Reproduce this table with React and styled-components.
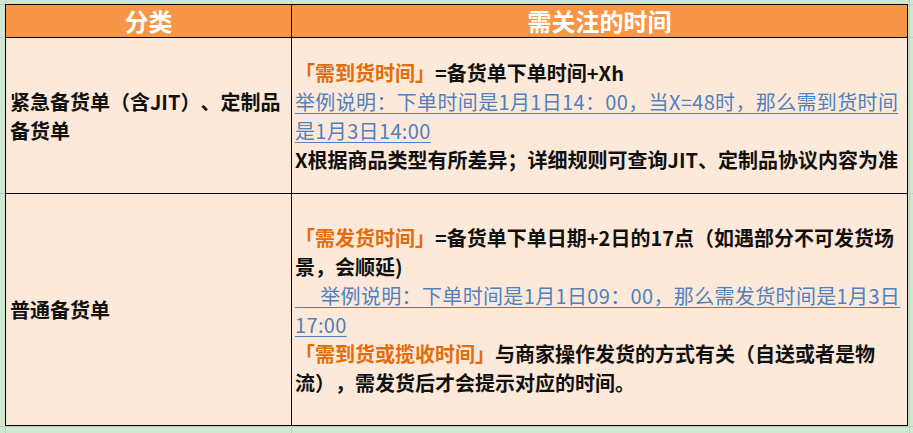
import React from 'react';
import styled, { createGlobalStyle } from 'styled-components';

const GlobalStyle = createGlobalStyle`
  html, body {
    margin: 0;
    padding: 0;
  }
  body {
    width: 913px;
    height: 433px;
    overflow: hidden;
    font-family: "Noto Sans CJK SC", "Noto Sans", sans-serif;
    text-spacing-trim: space-all;
    background-color: #cee8d1;
    background-image:
      linear-gradient(#c3c8c3, #c3c8c3),
      linear-gradient(#c3c8c3, #c3c8c3),
      linear-gradient(#c3c8c3, #c3c8c3),
      linear-gradient(#c3c8c3, #c3c8c3),
      linear-gradient(#c3c8c3, #c3c8c3),
      linear-gradient(#c3c8c3, #c3c8c3),
      linear-gradient(#c3c8c3, #c3c8c3);
    background-size: 1px 100%, 1px 100%, 1px 100%, 100% 1px, 100% 1px, 100% 1px, 100% 1px;
    background-position: 5px 0, 291px 0, 909px 0, 0 4px, 0 37px, 0 193px, 0 426px;
    background-repeat: no-repeat;
  }
`;

const Sheet = styled.div`
  padding: 4px 0 0 5px;
`;

const Table = styled.div`
  display: grid;
  grid-template-columns: 286px 616px;
  grid-template-rows: 33px 156px 232px;
  width: 903px;
  border-left: 1px solid #000;
  border-top: 1px solid #000;
  box-sizing: border-box;
`;

const Cell = styled.div`
  box-sizing: border-box;
  border-right: 1px solid #000;
  border-bottom: 1px solid #000;
  display: flex;
  align-items: center;
  background: #fde9d9;
  padding-left: ${p => p.$pad}px;
`;

const HeadCell = styled(Cell)`
  background: #f79646;
  justify-content: center;
  padding-left: 0;
  color: #fff;
  font-size: 24px;
  font-weight: 700;
  line-height: 1;
`;

const Block = styled.div`
  display: flex;
  flex-direction: column;
`;

const Line = styled.div`
  white-space: nowrap;
  font-size: 20px;
  line-height: 29px;
  font-weight: 700;
  color: #111;
`;

const Key = styled.span`
  color: #e36c0a;
`;

const Example = styled.span`
  color: #4f81bd;
  font-weight: 400;
  letter-spacing: 0.35px;
  text-decoration: underline;
  text-underline-offset: 3px;
  text-decoration-thickness: 1px;
`;

const App = () => {
  return (
    <>
      <GlobalStyle />
      <Sheet>
        <Table>
          <HeadCell>分类</HeadCell>
          <HeadCell>需关注的时间</HeadCell>

          <Cell $pad={4}>
            <Block>
              <Line>紧急备货单（含JIT）、定制品</Line>
              <Line>备货单</Line>
            </Block>
          </Cell>
          <Cell $pad={3}>
            <Block>
              <Line><Key>「需到货时间」</Key>=备货单下单时间+Xh</Line>
              <Line><Example>举例说明：下单时间是1月1日14：00，当X=48时，那么需到货时间</Example></Line>
              <Line><Example>是1月3日14:00</Example></Line>
              <Line>X根据商品类型有所差异；详细规则可查询JIT、定制品协议内容为准</Line>
            </Block>
          </Cell>

          <Cell $pad={4}>
            <Block>
              <Line>普通备货单</Line>
            </Block>
          </Cell>
          <Cell $pad={3}>
            <Block>
              <Line><Key>「需发货时间」</Key>=备货单下单日期+2日的17点（如遇部分不可发货场</Line>
              <Line>景，会顺延)</Line>
              <Line><Example>{'\u3000 '}举例说明：下单时间是1月1日09：00，那么需发货时间是1月3日</Example></Line>
              <Line><Example>17:00</Example></Line>
              <Line><Key>「需到货或揽收时间」</Key>与商家操作发货的方式有关（自送或者是物</Line>
              <Line>流），需发货后才会提示对应的时间。</Line>
            </Block>
          </Cell>
        </Table>
      </Sheet>
    </>
  );
};

export default App;
